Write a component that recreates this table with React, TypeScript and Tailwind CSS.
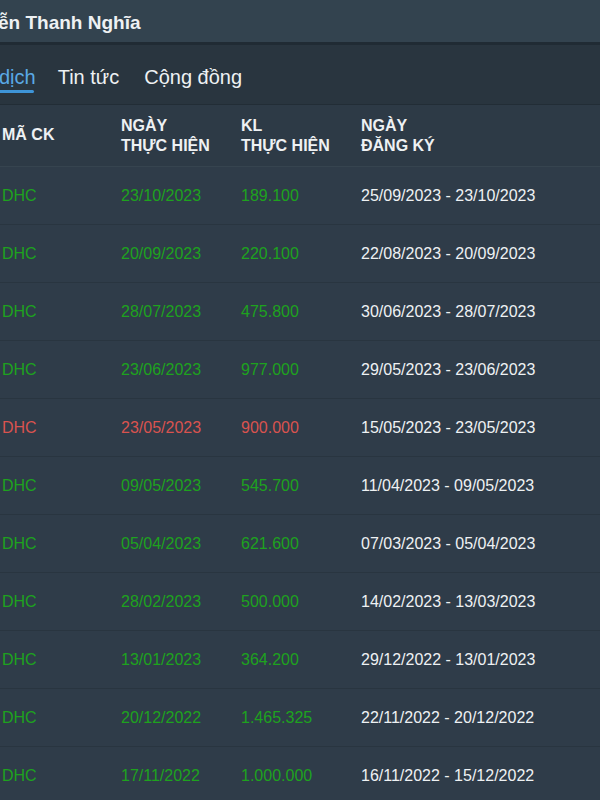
import React from 'react';

type Row = {
  code: string;
  date: string;
  volume: string;
  range: string;
  sell?: boolean;
};

const rows: Row[] = [
  { code: 'DHC', date: '23/10/2023', volume: '189.100', range: '25/09/2023 - 23/10/2023' },
  { code: 'DHC', date: '20/09/2023', volume: '220.100', range: '22/08/2023 - 20/09/2023' },
  { code: 'DHC', date: '28/07/2023', volume: '475.800', range: '30/06/2023 - 28/07/2023' },
  { code: 'DHC', date: '23/06/2023', volume: '977.000', range: '29/05/2023 - 23/06/2023' },
  { code: 'DHC', date: '23/05/2023', volume: '900.000', range: '15/05/2023 - 23/05/2023', sell: true },
  { code: 'DHC', date: '09/05/2023', volume: '545.700', range: '11/04/2023 - 09/05/2023' },
  { code: 'DHC', date: '05/04/2023', volume: '621.600', range: '07/03/2023 - 05/04/2023' },
  { code: 'DHC', date: '28/02/2023', volume: '500.000', range: '14/02/2023 - 13/03/2023' },
  { code: 'DHC', date: '13/01/2023', volume: '364.200', range: '29/12/2022 - 13/01/2023' },
  { code: 'DHC', date: '20/12/2022', volume: '1.465.325', range: '22/11/2022 - 20/12/2022' },
  { code: 'DHC', date: '17/11/2022', volume: '1.000.000', range: '16/11/2022 - 15/12/2022' },
];

const App: React.FC = () => {
  return (
    <div
      className="w-[600px] h-[800px] overflow-hidden bg-[#2f3c49] text-[#eef1f3]"
      style={{ fontFamily: '"Liberation Sans", Arial, sans-serif' }}
    >
      {/* Title bar */}
      <div className="h-[45px] bg-[#33434f] flex items-center pt-[2px] border-b-[3px] border-[#202b34]">
        <h1 className="-ml-[2px] text-[19px] font-bold leading-none whitespace-nowrap">ễn Thanh Nghĩa</h1>
      </div>

      {/* Tabs */}
      <div className="h-[60px] bg-[#29353f] flex items-start pt-[20px] gap-[22px] text-[20px] border-b border-[#222d36]">
        <div className="-ml-[1px] leading-[24px]">
          <span className="text-[#5aa9e6]">dịch</span>
          <div className="h-[3px] w-[35px] bg-[#3e95d8] rounded-full mt-[1px]" />
        </div>
        <span className="leading-[24px]">Tin tức</span>
        <span className="leading-[24px] ml-[3px]">Cộng đồng</span>
      </div>

      {/* Table header */}
      <div className="h-[62px] bg-[#2d3a46] grid grid-cols-[119px_120px_120px_1fr] pl-[2px] pt-[11px] text-[16px] font-bold leading-[20px] border-b border-[#36444f]">
        <div className="pt-[9px]">MÃ CK</div>
        <div>
          NGÀY
          <br />
          THỰC HIỆN
        </div>
        <div>
          KL
          <br />
          THỰC HIỆN
        </div>
        <div>
          NGÀY
          <br />
          ĐĂNG KÝ
        </div>
      </div>

      {/* Rows */}
      {rows.map((r, i) => {
        const tone = r.sell ? 'text-[#d9534f]' : 'text-[#1ea21e]';
        return (
          <div
            key={i}
            className="h-[58px] grid grid-cols-[119px_120px_120px_1fr] pl-[2px] items-center text-[16px] border-b border-[#293540] bg-[#2f3c49]"
          >
            <div className={tone}>{r.code}</div>
            <div className={tone}>{r.date}</div>
            <div className={tone}>{r.volume}</div>
            <div className="text-[#eef1f3]">{r.range}</div>
          </div>
        );
      })}
    </div>
  );
};

export default App;
